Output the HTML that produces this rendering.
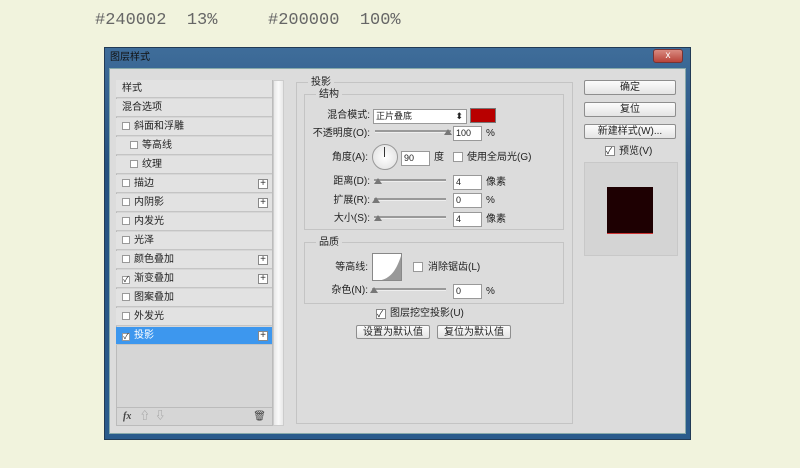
<!DOCTYPE html>
<html><head><meta charset="utf-8"><style>
*{margin:0;padding:0;box-sizing:border-box}
body{width:800px;height:468px;background:#f1f3dd;position:relative;overflow:hidden;font-family:"Liberation Sans","Noto Sans CJK SC",sans-serif;font-size:10px;line-height:12px;color:#222}
.a{position:absolute;white-space:nowrap}
.top{font-family:"Liberation Mono","DejaVu Sans Mono",monospace;font-size:17px;line-height:20px;color:#666}
.win{left:104px;top:47px;width:587px;height:393px;background:linear-gradient(180deg,#3f6d9a,#24507e 30%,#2a5b8c);border:1px solid #223a55}
.title{left:110px;top:52px;color:#111;font-size:10px}
.inner{left:109px;top:68px;width:577px;height:366px;background:#dcdcdc;border:1px solid #8aa}
.list{left:116px;top:80px;width:157px;height:346px;background:#d6d6d6;border:1px solid #bbb}
.row{position:absolute;left:116px;width:156px;height:18px;background:#e2e2e2;border-bottom:1px solid #c4c4c4;padding-left:6px;line-height:18px;font-size:10px}
.cb{display:inline-block;width:8px;height:8px;border:1px solid #999;background:#fff;margin-right:4px;vertical-align:-1px;font-size:8px;line-height:6px;text-align:center}
.plus{position:absolute;right:4px;top:4px;width:10px;height:10px;border:1px solid #888;background:#fff;font-size:10px;line-height:8px;text-align:center;color:#333}
.sel{background:#3d97ee;color:#fff}
.scroll{left:273px;top:80px;width:11px;height:346px;background:linear-gradient(90deg,#e8e8e8,#fafafa,#e8e8e8);border:1px solid #ccc}
.grp{border:1px solid #c4c4c4}
.lbl{font-size:10px;text-align:right;line-height:12px}
.inp{background:#fff;border:1px solid #999;height:15px;font-size:9px;line-height:13px;padding-left:2px}
.sl{height:3px;background:#999;border-bottom:1px solid #eee}
.tri{width:0;height:0;border-left:4px solid transparent;border-right:4px solid transparent;border-bottom:6px solid #777}
.btn{background:linear-gradient(#fcfcfc,#e4e4e4);border:1px solid #8e8e8e;border-radius:2px;text-align:center;font-size:10px;line-height:13px}
</style></head><body>
<div class="a top" style="left:95px;top:11px">#240002&nbsp;&nbsp;13%</div>
<div class="a top" style="left:268px;top:11px">#200000&nbsp;&nbsp;100%</div>
<div class="a win"></div>
<div class="a title">图层样式</div>
<div class="a" style="left:653px;top:49px;width:30px;height:14px;background:linear-gradient(#d98a80,#b8443a);border:1px solid #733;border-radius:3px;color:#fff;font-size:10px;text-align:center;line-height:12px">x</div>
<div class="a inner"></div>
<div class="a list"></div>
<div class="row" style="top:80px">样式</div>
<div class="row" style="top:99px">混合选项</div>
<div class="row" style="top:118px"><span class="cb"></span>斜面和浮雕</div>
<div class="row" style="top:137px;padding-left:14px"><span class="cb"></span>等高线</div>
<div class="row" style="top:156px;padding-left:14px"><span class="cb"></span>纹理</div>
<div class="row" style="top:175px"><span class="cb"></span>描边<span class="plus">+</span></div>
<div class="row" style="top:194px"><span class="cb"></span>内阴影<span class="plus">+</span></div>
<div class="row" style="top:213px"><span class="cb"></span>内发光</div>
<div class="row" style="top:232px"><span class="cb"></span>光泽</div>
<div class="row" style="top:251px"><span class="cb"></span>颜色叠加<span class="plus">+</span></div>
<div class="row" style="top:270px"><span class="cb">✓</span>渐变叠加<span class="plus">+</span></div>
<div class="row" style="top:289px"><span class="cb"></span>图案叠加</div>
<div class="row" style="top:308px"><span class="cb"></span>外发光</div>
<div class="row sel" style="top:327px"><span class="cb" style="color:#333">✓</span>投影<span class="plus">+</span></div>
<div class="a" style="left:117px;top:407px;width:155px;height:18px;border-top:1px solid #bbb;font-size:10px;color:#444;padding:3px 6px"><i style="font-family:'Liberation Serif',serif;font-weight:bold">fx</i>&nbsp;&nbsp;&nbsp;<span style="color:#999">⇧&nbsp;&nbsp;⇩</span><span style="float:right">🗑</span></div>
<div class="a scroll"></div>
<div class="a grp" style="left:296px;top:82px;width:277px;height:342px"></div>
<div class="a" style="left:308px;top:77px;background:#dcdcdc;padding:0 3px">投影</div>
<div class="a grp" style="left:304px;top:94px;width:260px;height:136px"></div>
<div class="a" style="left:316px;top:89px;background:#dcdcdc;padding:0 3px">结构</div>
<div class="a lbl" style="left:290px;top:110px;width:80px">混合模式:</div>
<div class="a inp" style="left:373px;top:109px;width:94px">正片叠底<span style="float:right;padding-right:3px">⬍</span></div>
<div class="a" style="left:470px;top:108px;width:26px;height:15px;background:#b80000;border:1px solid #777"></div>
<div class="a lbl" style="left:290px;top:128px;width:80px">不透明度(O):</div>
<div class="a sl" style="left:375px;top:130px;width:76px"></div><div class="a tri" style="left:444px;top:129px"></div>
<div class="a inp" style="left:453px;top:126px;width:29px">100</div><div class="a" style="left:486px;top:128px">%</div>
<div class="a lbl" style="left:290px;top:152px;width:78px">角度(A):</div>
<div class="a" style="left:372px;top:144px;width:26px;height:26px;border-radius:50%;background:radial-gradient(#fff,#ddd);border:1px solid #999"></div>
<div class="a" style="left:384px;top:147px;width:1px;height:10px;background:#333"></div>
<div class="a inp" style="left:401px;top:151px;width:29px">90</div><div class="a" style="left:434px;top:152px">度</div>
<div class="a" style="left:453px;top:152px;width:10px;height:10px;background:#fff;border:1px solid #999"></div>
<div class="a" style="left:467px;top:152px">使用全局光(G)</div>
<div class="a lbl" style="left:290px;top:176px;width:80px">距离(D):</div>
<div class="a sl" style="left:374px;top:179px;width:72px"></div><div class="a tri" style="left:374px;top:178px"></div>
<div class="a inp" style="left:453px;top:175px;width:29px">4</div><div class="a" style="left:486px;top:177px">像素</div>
<div class="a lbl" style="left:290px;top:195px;width:80px">扩展(R):</div>
<div class="a sl" style="left:374px;top:198px;width:72px"></div><div class="a tri" style="left:372px;top:197px"></div>
<div class="a inp" style="left:453px;top:193px;width:29px">0</div><div class="a" style="left:486px;top:195px">%</div>
<div class="a lbl" style="left:290px;top:213px;width:80px">大小(S):</div>
<div class="a sl" style="left:374px;top:216px;width:72px"></div><div class="a tri" style="left:374px;top:215px"></div>
<div class="a inp" style="left:453px;top:212px;width:29px">4</div><div class="a" style="left:486px;top:214px">像素</div>
<div class="a grp" style="left:304px;top:242px;width:260px;height:62px"></div>
<div class="a" style="left:316px;top:237px;background:#dcdcdc;padding:0 3px">品质</div>
<div class="a lbl" style="left:290px;top:262px;width:78px">等高线:</div>
<div class="a" style="left:372px;top:253px;width:30px;height:28px;background:#fff;border:1px solid #888;overflow:hidden"><svg width="30" height="28"><path d="M0 28 L0 27 C15 27 22 20 28 2 L28 28Z" fill="#999"/></svg></div>
<div class="a" style="left:413px;top:262px;width:10px;height:10px;background:#fff;border:1px solid #999"></div>
<div class="a" style="left:428px;top:262px">消除锯齿(L)</div>
<div class="a lbl" style="left:290px;top:285px;width:78px">杂色(N):</div>
<div class="a sl" style="left:372px;top:288px;width:74px"></div><div class="a tri" style="left:370px;top:287px"></div>
<div class="a inp" style="left:453px;top:284px;width:29px">0</div><div class="a" style="left:486px;top:286px">%</div>
<div class="a" style="left:376px;top:309px;width:10px;height:10px;background:#fff;border:1px solid #888;font-size:9px;line-height:8px">✓</div>
<div class="a" style="left:390px;top:308px">图层挖空投影(U)</div>
<div class="a btn" style="left:356px;top:325px;width:74px;height:14px">设置为默认值</div>
<div class="a btn" style="left:437px;top:325px;width:74px;height:14px">复位为默认值</div>
<div class="a btn" style="left:584px;top:80px;width:92px;height:15px">确定</div>
<div class="a btn" style="left:584px;top:102px;width:92px;height:15px">复位</div>
<div class="a btn" style="left:584px;top:124px;width:92px;height:15px">新建样式(W)...</div>
<div class="a" style="left:605px;top:146px;width:10px;height:10px;background:#fff;border:1px solid #888;font-size:9px;line-height:8px">✓</div>
<div class="a" style="left:619px;top:146px">预览(V)</div>
<div class="a" style="left:584px;top:162px;width:94px;height:94px;background:#d4d4d4;border:1px solid #c8c8c8"></div>
<div class="a" style="left:607px;top:187px;width:46px;height:47px;background:#1e0002;border-bottom:1px solid #c33"></div>
</body></html>
